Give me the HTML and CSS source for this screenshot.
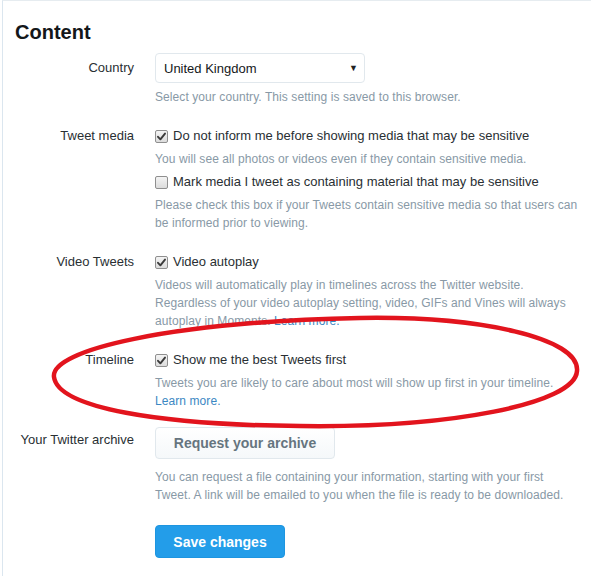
FILE: index.html
```html
<!DOCTYPE html>
<html lang="en">
<head>
<meta charset="utf-8">
<title>Content settings</title>
<link rel="stylesheet" href="styles.css">
</head>
<body>
<div class="card">
  <h2 class="title">Content</h2>

  <div class="row row-country">
    <div class="label label-select">Country</div>
    <div class="controls">
      <div class="select"><span>United Kingdom</span><span class="caret">&#9660;</span></div>
      <p class="help help-select">Select your country. This setting is saved to this browser.</p>
    </div>
  </div>

  <div class="row">
    <div class="label">Tweet media</div>
    <div class="controls">
      <div class="check"><span class="box"><svg viewBox="0 0 13 13" width="13" height="13"><path d="M3 6.8 L5.4 9.3 L10 3.6" fill="none" stroke="#3a3a3a" stroke-width="1.9" stroke-linecap="round" stroke-linejoin="round"/></svg></span>Do not inform me before showing media that may be sensitive</div>
      <p class="help">You will see all photos or videos even if they contain sensitive media.</p>
      <div class="check check-next"><span class="box"></span>Mark media I tweet as containing material that may be sensitive</div>
      <p class="help">Please check this box if your Tweets contain sensitive media so that users can be informed prior to viewing.</p>
    </div>
  </div>

  <div class="row">
    <div class="label">Video Tweets</div>
    <div class="controls">
      <div class="check"><span class="box"><svg viewBox="0 0 13 13" width="13" height="13"><path d="M3 6.8 L5.4 9.3 L10 3.6" fill="none" stroke="#3a3a3a" stroke-width="1.9" stroke-linecap="round" stroke-linejoin="round"/></svg></span>Video autoplay</div>
      <p class="help">Videos will automatically play in timelines across the Twitter website. Regardless of your video autoplay setting, video, GIFs and Vines will always autoplay in Moments. <a href="#">Learn more.</a></p>
    </div>
  </div>

  <div class="row">
    <div class="label">Timeline</div>
    <div class="controls">
      <div class="check"><span class="box"><svg viewBox="0 0 13 13" width="13" height="13"><path d="M3 6.8 L5.4 9.3 L10 3.6" fill="none" stroke="#3a3a3a" stroke-width="1.9" stroke-linecap="round" stroke-linejoin="round"/></svg></span>Show me the best Tweets first</div>
      <p class="help">Tweets you are likely to care about most will show up first in your timeline. <a href="#">Learn more.</a></p>
    </div>
  </div>

  <div class="row row-archive">
    <div class="label label-button">Your Twitter archive</div>
    <div class="controls">
      <button class="btn" type="button">Request your archive</button>
      <p class="help help-button">You can request a file containing your information, starting with your first Tweet. A link will be emailed to you when the file is ready to be downloaded.</p>
    </div>
  </div>

  <div class="row row-save">
    <div class="label"></div>
    <div class="controls">
      <button class="btn btn-primary" type="button">Save changes</button>
    </div>
  </div>

  <svg class="scribble" width="591" height="576" viewBox="0 0 591 576">
    <path d="M54 377 C50 350 170 322 360 318 C480 316 580 338 577 371 C575 404 450 428 300 426 C160 425 58 408 54 377 Z" fill="none" stroke="#e2141d" stroke-width="4.5" stroke-linejoin="round"/>
  </svg>
</div>
</body>
</html>
```

FILE: styles.css
```css
html, body {
  margin: 0;
  padding: 0;
  background: #ffffff;
}

body {
  font-family: "Liberation Sans", Arial, sans-serif;
  color: #333333;
  width: 591px;
  height: 576px;
  overflow: hidden;
}

.card {
  position: relative;
  margin-left: 2px;
  border-left: 1px solid #dbe6ef;
  border-top: 1px solid #e6ecf0;
  padding: 19px 0 0 12px;
  height: 576px;
  box-sizing: border-box;
}

.title {
  margin: 0;
  font-size: 20px;
  line-height: 24px;
  font-weight: bold;
  color: #14171a;
}

.row {
  display: grid;
  grid-template-columns: 119px 1fr;
  column-gap: 21px;
  margin-top: 20px;
}

.row-country { margin-top: 9px; }
.row-archive { margin-top: 17px; }
.row-save { margin-top: 21px; }

.label {
  text-align: right;
  font-size: 13px;
  line-height: 20px;
  color: #292f33;
  white-space: nowrap;
}

.label-select { padding-top: 5px; }
.label-button { padding-top: 3px; }

.controls {
  min-width: 0;
}

.select {
  box-sizing: border-box;
  width: 210px;
  height: 30px;
  border: 1px solid #e1e8ed;
  border-radius: 4px;
  display: flex;
  align-items: center;
  justify-content: space-between;
  padding: 0 6px 0 8px;
  font-size: 13px;
  color: #14171a;
}

.caret {
  font-size: 9px;
  color: #222;
}

.check {
  display: flex;
  align-items: center;
  font-size: 13px;
  line-height: 20px;
  color: #292f33;
  white-space: nowrap;
}

.check-next { margin-top: 4px; }

.box {
  box-sizing: border-box;
  width: 13px;
  height: 13px;
  border: 1px solid #8f8f8f;
  border-radius: 2px;
  background: linear-gradient(#f4f4f4, #dcdcdc);
  margin-right: 5px;
  flex: none;
  position: relative;
}

.box svg {
  position: absolute;
  left: -1px;
  top: -1px;
}

.help {
  margin: 4px 0 0 0;
  font-size: 12px;
  line-height: 18px;
  letter-spacing: 0.08px;
  color: #8899a6;
  padding-right: 12px;
}

.help-select { margin-top: 5px; }
.help-button { margin-top: 9px; }

.help a {
  color: #3b88c3;
  text-decoration: none;
}

.btn {
  display: block;
  box-sizing: border-box;
  height: 32px;
  padding: 0 17px;
  border: 1px solid #e1e8ed;
  border-radius: 4px;
  background: linear-gradient(#ffffff, #f5f8fa);
  font-family: "Liberation Sans", Arial, sans-serif;
  font-size: 14px;
  font-weight: bold;
  color: #66757f;
  width: 180px;
  text-align: center;
}

.btn-primary {
  height: 33px;
  width: 130px;
  border-color: #1d95e0;
  background: #239de9;
  color: #ffffff;
}

.scribble {
  position: absolute;
  left: -3px;
  top: -1px;
  pointer-events: none;
}
```
